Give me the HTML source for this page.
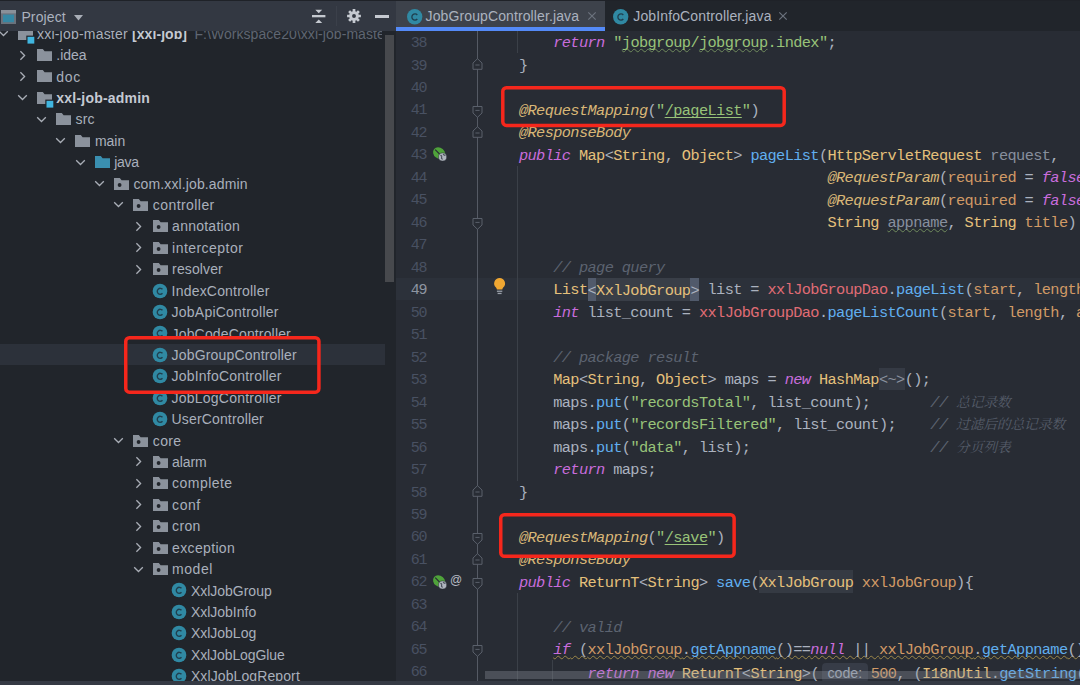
<!DOCTYPE html>
<html lang="en"><head><meta charset="utf-8"><title>IDE</title>
<style>
*{margin:0;padding:0;box-sizing:border-box}
html,body{width:1080px;height:685px;overflow:hidden;background:#282c34}
body{position:relative;font-family:"Liberation Sans","Noto Sans CJK SC",sans-serif;color:#abb2bf}
.abs{position:absolute}
#side{position:absolute;left:0;top:0;width:396.5px;height:685px;background:#21252b;overflow:hidden}
#sidehead{position:absolute;left:0;top:0;width:396.5px;height:30.8px;background:#333842}
#topline{position:absolute;left:0;top:0;width:1080px;height:1.1px;background:#1f2228;z-index:9}
#selrow{position:absolute;left:0;top:343.8px;width:385px;height:21.5px;background:#2c313a}
#sthumb{position:absolute;left:385px;top:34.8px;width:9px;height:247.4px;background:#47494d}
.ic{position:absolute;display:block;overflow:visible}
.tl{position:absolute;height:20px;line-height:20px;font-size:14px;color:#a9b0bc;white-space:pre}
.tl b{font-weight:bold;color:#c5cad3}
.tl .path{color:#5f6672}
#ptitle{position:absolute;left:21.4px;top:7px;height:20px;line-height:20px;font-size:14px;color:#abb2bf}
#editor{position:absolute;left:396.3px;top:0;width:683.7px;height:685px;background:#282c34;overflow:hidden}
#tabbar{position:absolute;left:0;top:0;width:683.7px;height:30.9px;background:#21252b}
#tab1{position:absolute;left:0;top:1px;width:208.4px;height:30px;background:#3d424b}
#tab1u{position:absolute;left:0;top:27.2px;width:208.4px;height:3.7px;background:#548af7}
.tabt{position:absolute;top:6.3px;height:20px;line-height:20px;font-size:14px;color:#abb2bf;white-space:pre}
#curline{position:absolute;left:0;top:278px;width:683.7px;height:22.4px;background:#2c313a}
.ln{position:absolute;left:0;width:29.3px;text-align:right;height:22.5px;line-height:22.5px;font-family:"Liberation Mono",monospace;font-size:15px;letter-spacing:-1.2px;color:#495162;margin-top:2.2px;padding-right:0}
.ln.cur{color:#8e95a1}
.cl{position:absolute;left:87.7px;height:22.5px;line-height:22.5px;font-family:"Liberation Mono","Noto Serif CJK SC",monospace;font-size:15.3px;letter-spacing:-0.61px;color:#abb2bf;white-space:pre;margin-top:1.4px}
.k{color:#c96ddc;font-style:italic}
.s{color:#98c379}
.a{color:#d9b777;font-style:italic}
.c{color:#e5c07b}
.m{color:#61afef}
.f{color:#e06c75}
.p{color:#878f9d}
.o{color:#d19a66}
.n{color:#d19a66}
.cm{color:#5c6370;font-style:italic}
.cj{font-family:"Liberation Mono","Noto Serif CJK SC",serif;font-size:13.8px;line-height:1;letter-spacing:-0.2px;color:#565d6a}
.u{text-decoration:underline wavy #6f8a5c;text-decoration-thickness:0.6px;text-underline-offset:1.2px;text-decoration-skip-ink:none}
.ul{text-decoration:underline;text-underline-offset:2px;text-decoration-thickness:1px;text-decoration-skip-ink:none}
.hl{background:#515a6b;padding:3.97px 0 1.17px}
.hb{background:#353a43;padding:3.97px 0 1.17px}
.fold{background:#353a44;color:#8a919e;padding:3px 0 0.5px}
.wv{text-decoration:underline wavy #9c8748;text-decoration-thickness:0.6px;text-underline-offset:1.2px;text-decoration-skip-ink:none}
.hint{background:#373c47;color:#9da5b4;border-radius:4px;padding:2px 5.5px 2px 5px;margin:0 3px 0 3.5px;font-family:"Liberation Sans",sans-serif;font-size:14.2px;letter-spacing:0}
.redbox{position:absolute;border:3px solid #f5271c;border-radius:6px}
.vline{position:absolute;width:1px;background:#3b4048}
.fline{position:absolute;width:1px;background:#555a64}
#bottom{position:absolute;left:0;top:680.6px;width:1080px;height:5px;background:#353a44;z-index:8}
#hscroll{position:absolute;left:88px;top:670.6px;width:595px;height:8.4px;background:rgba(150,155,165,.32)}
.gat{font-family:"Liberation Sans",sans-serif;font-size:12px;line-height:22px;height:22px;color:#b8bcc4}
#ed{position:absolute;left:0.7px;top:0;width:683px;height:685px}
.hc{background:#393e47;padding:3.97px 0 1.17px}

</style></head>
<body>
<div id="side">
<div id="selrow"></div>
<svg class="ic" style="left:-2.5px;top:28.1px" width="11" height="11" viewBox="0 0 11 11"><path d="M1.2 3.3 L5.5 7.5 L9.8 3.3" fill="none" stroke="#a9aeb7" stroke-width="1.3"/></svg>
<svg class="ic" style="left:17.5px;top:27.6px" width="18" height="16" viewBox="0 0 18 16"><path d="M0 0 H5.8 L7.6 2.2 H15 V12 H0 Z" fill="#8b929c"/><rect x="8.3" y="7.6" width="8.5" height="8.5" fill="#21252b"/><rect x="9.5" y="8.8" width="6.8" height="6.8" fill="#40b6e0"/></svg>
<div class="tl" id="t0" style="left:37.0px;top:23.73px;width:344.5px;overflow:hidden"><span style="letter-spacing:0.207px">xxl-job-master</span><span class="abs" style="left:95px"><b style="letter-spacing:0.072px">[xxl-job]</b></span><span class="abs path" style="left:157.4px"><span style="letter-spacing:0.057px">F:\Workspace20\xxl-job-master</span></span></div>
<svg class="ic" style="left:16.8px;top:49.5px" width="11" height="11" viewBox="0 0 11 11"><path d="M3.4 1.2 L7.6 5.5 L3.4 9.8" fill="none" stroke="#a9aeb7" stroke-width="1.3"/></svg>
<svg class="ic" style="left:36.8px;top:49.0px" width="18" height="16" viewBox="0 0 18 16"><path d="M0 0 H5.8 L7.6 2.2 H15 V12 H0 Z" fill="#8b929c"/></svg>
<div class="tl" id="t1" style="left:56.3px;top:45.15px"><span style="letter-spacing:-0.042px">.idea</span></div>
<svg class="ic" style="left:16.8px;top:70.9px" width="11" height="11" viewBox="0 0 11 11"><path d="M3.4 1.2 L7.6 5.5 L3.4 9.8" fill="none" stroke="#a9aeb7" stroke-width="1.3"/></svg>
<svg class="ic" style="left:36.8px;top:70.4px" width="18" height="16" viewBox="0 0 18 16"><path d="M0 0 H5.8 L7.6 2.2 H15 V12 H0 Z" fill="#8b929c"/></svg>
<div class="tl" id="t2" style="left:56.3px;top:66.56px"><span style="letter-spacing:0.641px">doc</span></div>
<svg class="ic" style="left:16.8px;top:92.3px" width="11" height="11" viewBox="0 0 11 11"><path d="M1.2 3.3 L5.5 7.5 L9.8 3.3" fill="none" stroke="#a9aeb7" stroke-width="1.3"/></svg>
<svg class="ic" style="left:36.8px;top:91.8px" width="18" height="16" viewBox="0 0 18 16"><path d="M0 0 H5.8 L7.6 2.2 H15 V12 H0 Z" fill="#8b929c"/><rect x="8.3" y="7.6" width="8.5" height="8.5" fill="#21252b"/><rect x="9.5" y="8.8" width="6.8" height="6.8" fill="#40b6e0"/></svg>
<div class="tl" id="t3" style="left:56.3px;top:87.98px"><b style="letter-spacing:0.214px">xxl-job-admin</b></div>
<svg class="ic" style="left:36.1px;top:113.7px" width="11" height="11" viewBox="0 0 11 11"><path d="M1.2 3.3 L5.5 7.5 L9.8 3.3" fill="none" stroke="#a9aeb7" stroke-width="1.3"/></svg>
<svg class="ic" style="left:56.1px;top:113.2px" width="18" height="16" viewBox="0 0 18 16"><path d="M0 0 H5.8 L7.6 2.2 H15 V12 H0 Z" fill="#8b929c"/></svg>
<div class="tl" id="t4" style="left:75.6px;top:109.40px"><span style="letter-spacing:0.076px">src</span></div>
<svg class="ic" style="left:55.4px;top:135.2px" width="11" height="11" viewBox="0 0 11 11"><path d="M1.2 3.3 L5.5 7.5 L9.8 3.3" fill="none" stroke="#a9aeb7" stroke-width="1.3"/></svg>
<svg class="ic" style="left:75.4px;top:134.7px" width="18" height="16" viewBox="0 0 18 16"><path d="M0 0 H5.8 L7.6 2.2 H15 V12 H0 Z" fill="#8b929c"/></svg>
<div class="tl" id="t5" style="left:94.9px;top:130.81px"><span style="letter-spacing:0.01px">main</span></div>
<svg class="ic" style="left:74.7px;top:156.6px" width="11" height="11" viewBox="0 0 11 11"><path d="M1.2 3.3 L5.5 7.5 L9.8 3.3" fill="none" stroke="#a9aeb7" stroke-width="1.3"/></svg>
<svg class="ic" style="left:94.7px;top:156.1px" width="18" height="16" viewBox="0 0 18 16"><path d="M0 0 H5.8 L7.6 2.2 H15 V12 H0 Z" fill="#3a8fb0"/></svg>
<div class="tl" id="t6" style="left:114.2px;top:152.23px"><span style="letter-spacing:-0.272px">java</span></div>
<svg class="ic" style="left:94.0px;top:178.0px" width="11" height="11" viewBox="0 0 11 11"><path d="M1.2 3.3 L5.5 7.5 L9.8 3.3" fill="none" stroke="#a9aeb7" stroke-width="1.3"/></svg>
<svg class="ic" style="left:114.0px;top:177.5px" width="18" height="16" viewBox="0 0 18 16"><path d="M0 0 H5.8 L7.6 2.2 H15 V12 H0 Z" fill="#8b929c"/><circle cx="5.6" cy="7" r="1.9" fill="#21252b"/></svg>
<div class="tl" id="t7" style="left:133.5px;top:173.64px"><span style="letter-spacing:0.121px">com.xxl.job.admin</span></div>
<svg class="ic" style="left:113.3px;top:199.4px" width="11" height="11" viewBox="0 0 11 11"><path d="M1.2 3.3 L5.5 7.5 L9.8 3.3" fill="none" stroke="#a9aeb7" stroke-width="1.3"/></svg>
<svg class="ic" style="left:133.3px;top:198.9px" width="18" height="16" viewBox="0 0 18 16"><path d="M0 0 H5.8 L7.6 2.2 H15 V12 H0 Z" fill="#8b929c"/><circle cx="5.6" cy="7" r="1.9" fill="#21252b"/></svg>
<div class="tl" id="t8" style="left:152.8px;top:195.06px"><span style="letter-spacing:0.431px">controller</span></div>
<svg class="ic" style="left:132.6px;top:220.8px" width="11" height="11" viewBox="0 0 11 11"><path d="M3.4 1.2 L7.6 5.5 L3.4 9.8" fill="none" stroke="#a9aeb7" stroke-width="1.3"/></svg>
<svg class="ic" style="left:152.6px;top:220.3px" width="18" height="16" viewBox="0 0 18 16"><path d="M0 0 H5.8 L7.6 2.2 H15 V12 H0 Z" fill="#8b929c"/><circle cx="5.6" cy="7" r="1.9" fill="#21252b"/></svg>
<div class="tl" id="t9" style="left:172.1px;top:216.47px"><span style="letter-spacing:0.249px">annotation</span></div>
<svg class="ic" style="left:132.6px;top:242.2px" width="11" height="11" viewBox="0 0 11 11"><path d="M3.4 1.2 L7.6 5.5 L3.4 9.8" fill="none" stroke="#a9aeb7" stroke-width="1.3"/></svg>
<svg class="ic" style="left:152.6px;top:241.7px" width="18" height="16" viewBox="0 0 18 16"><path d="M0 0 H5.8 L7.6 2.2 H15 V12 H0 Z" fill="#8b929c"/><circle cx="5.6" cy="7" r="1.9" fill="#21252b"/></svg>
<div class="tl" id="t10" style="left:172.1px;top:237.88px"><span style="letter-spacing:0.459px">interceptor</span></div>
<svg class="ic" style="left:132.6px;top:263.6px" width="11" height="11" viewBox="0 0 11 11"><path d="M3.4 1.2 L7.6 5.5 L3.4 9.8" fill="none" stroke="#a9aeb7" stroke-width="1.3"/></svg>
<svg class="ic" style="left:152.6px;top:263.1px" width="18" height="16" viewBox="0 0 18 16"><path d="M0 0 H5.8 L7.6 2.2 H15 V12 H0 Z" fill="#8b929c"/><circle cx="5.6" cy="7" r="1.9" fill="#21252b"/></svg>
<div class="tl" id="t11" style="left:172.1px;top:259.30px"><span style="letter-spacing:0.125px">resolver</span></div>
<svg class="ic" style="left:152.1px;top:282.6px" width="16" height="16" viewBox="0 0 16 16"><circle cx="8" cy="8" r="7.35" fill="#3089a3"/><path d="M10.5 6.3 A3 3 0 1 0 10.5 10.3" fill="none" stroke="#1f3f4e" stroke-width="1.35"/></svg>
<div class="tl" id="t12" style="left:171.6px;top:280.71px"><span style="letter-spacing:0.198px">IndexController</span></div>
<svg class="ic" style="left:152.1px;top:304.0px" width="16" height="16" viewBox="0 0 16 16"><circle cx="8" cy="8" r="7.35" fill="#3089a3"/><path d="M10.5 6.3 A3 3 0 1 0 10.5 10.3" fill="none" stroke="#1f3f4e" stroke-width="1.35"/></svg>
<div class="tl" id="t13" style="left:171.6px;top:302.13px"><span style="letter-spacing:0.225px">JobApiController</span></div>
<svg class="ic" style="left:152.1px;top:325.4px" width="16" height="16" viewBox="0 0 16 16"><circle cx="8" cy="8" r="7.35" fill="#3089a3"/><path d="M10.5 6.3 A3 3 0 1 0 10.5 10.3" fill="none" stroke="#1f3f4e" stroke-width="1.35"/></svg>
<div class="tl" id="t14" style="left:171.6px;top:323.54px"><span style="letter-spacing:0.151px">JobCodeController</span></div>
<svg class="ic" style="left:152.1px;top:389.6px" width="16" height="16" viewBox="0 0 16 16"><circle cx="8" cy="8" r="7.35" fill="#3089a3"/><path d="M10.5 6.3 A3 3 0 1 0 10.5 10.3" fill="none" stroke="#1f3f4e" stroke-width="1.35"/></svg>
<div class="tl" id="t17" style="left:171.6px;top:387.79px"><span style="letter-spacing:0.217px">JobLogController</span></div>
<svg class="ic" style="left:152.1px;top:411.1px" width="16" height="16" viewBox="0 0 16 16"><circle cx="8" cy="8" r="7.35" fill="#3089a3"/><path d="M10.5 6.3 A3 3 0 1 0 10.5 10.3" fill="none" stroke="#1f3f4e" stroke-width="1.35"/></svg>
<div class="tl" id="t18" style="left:171.6px;top:409.20px"><span style="letter-spacing:0.146px">UserController</span></div>
<svg class="ic" style="left:113.3px;top:435.0px" width="11" height="11" viewBox="0 0 11 11"><path d="M1.2 3.3 L5.5 7.5 L9.8 3.3" fill="none" stroke="#a9aeb7" stroke-width="1.3"/></svg>
<svg class="ic" style="left:133.3px;top:434.5px" width="18" height="16" viewBox="0 0 18 16"><path d="M0 0 H5.8 L7.6 2.2 H15 V12 H0 Z" fill="#8b929c"/><circle cx="5.6" cy="7" r="1.9" fill="#21252b"/></svg>
<div class="tl" id="t19" style="left:152.8px;top:430.62px"><span style="letter-spacing:0.341px">core</span></div>
<svg class="ic" style="left:132.6px;top:456.4px" width="11" height="11" viewBox="0 0 11 11"><path d="M3.4 1.2 L7.6 5.5 L3.4 9.8" fill="none" stroke="#a9aeb7" stroke-width="1.3"/></svg>
<svg class="ic" style="left:152.6px;top:455.9px" width="18" height="16" viewBox="0 0 18 16"><path d="M0 0 H5.8 L7.6 2.2 H15 V12 H0 Z" fill="#8b929c"/><circle cx="5.6" cy="7" r="1.9" fill="#21252b"/></svg>
<div class="tl" id="t20" style="left:172.1px;top:452.03px"><span style="letter-spacing:-0.103px">alarm</span></div>
<svg class="ic" style="left:132.6px;top:477.8px" width="11" height="11" viewBox="0 0 11 11"><path d="M3.4 1.2 L7.6 5.5 L3.4 9.8" fill="none" stroke="#a9aeb7" stroke-width="1.3"/></svg>
<svg class="ic" style="left:152.6px;top:477.3px" width="18" height="16" viewBox="0 0 18 16"><path d="M0 0 H5.8 L7.6 2.2 H15 V12 H0 Z" fill="#8b929c"/><circle cx="5.6" cy="7" r="1.9" fill="#21252b"/></svg>
<div class="tl" id="t21" style="left:172.1px;top:473.45px"><span style="letter-spacing:0.461px">complete</span></div>
<svg class="ic" style="left:132.6px;top:499.2px" width="11" height="11" viewBox="0 0 11 11"><path d="M3.4 1.2 L7.6 5.5 L3.4 9.8" fill="none" stroke="#a9aeb7" stroke-width="1.3"/></svg>
<svg class="ic" style="left:152.6px;top:498.7px" width="18" height="16" viewBox="0 0 18 16"><path d="M0 0 H5.8 L7.6 2.2 H15 V12 H0 Z" fill="#8b929c"/><circle cx="5.6" cy="7" r="1.9" fill="#21252b"/></svg>
<div class="tl" id="t22" style="left:172.1px;top:494.86px"><span style="letter-spacing:0.533px">conf</span></div>
<svg class="ic" style="left:132.6px;top:520.6px" width="11" height="11" viewBox="0 0 11 11"><path d="M3.4 1.2 L7.6 5.5 L3.4 9.8" fill="none" stroke="#a9aeb7" stroke-width="1.3"/></svg>
<svg class="ic" style="left:152.6px;top:520.1px" width="18" height="16" viewBox="0 0 18 16"><path d="M0 0 H5.8 L7.6 2.2 H15 V12 H0 Z" fill="#8b929c"/><circle cx="5.6" cy="7" r="1.9" fill="#21252b"/></svg>
<div class="tl" id="t23" style="left:172.1px;top:516.28px"><span style="letter-spacing:0.341px">cron</span></div>
<svg class="ic" style="left:132.6px;top:542.0px" width="11" height="11" viewBox="0 0 11 11"><path d="M3.4 1.2 L7.6 5.5 L3.4 9.8" fill="none" stroke="#a9aeb7" stroke-width="1.3"/></svg>
<svg class="ic" style="left:152.6px;top:541.5px" width="18" height="16" viewBox="0 0 18 16"><path d="M0 0 H5.8 L7.6 2.2 H15 V12 H0 Z" fill="#8b929c"/><circle cx="5.6" cy="7" r="1.9" fill="#21252b"/></svg>
<div class="tl" id="t24" style="left:172.1px;top:537.70px"><span style="letter-spacing:0.34px">exception</span></div>
<svg class="ic" style="left:132.6px;top:563.5px" width="11" height="11" viewBox="0 0 11 11"><path d="M1.2 3.3 L5.5 7.5 L9.8 3.3" fill="none" stroke="#a9aeb7" stroke-width="1.3"/></svg>
<svg class="ic" style="left:152.6px;top:563.0px" width="18" height="16" viewBox="0 0 18 16"><path d="M0 0 H5.8 L7.6 2.2 H15 V12 H0 Z" fill="#8b929c"/><circle cx="5.6" cy="7" r="1.9" fill="#21252b"/></svg>
<div class="tl" id="t25" style="left:172.1px;top:559.11px"><span style="letter-spacing:0.532px">model</span></div>
<svg class="ic" style="left:171.4px;top:582.4px" width="16" height="16" viewBox="0 0 16 16"><circle cx="8" cy="8" r="7.35" fill="#3089a3"/><path d="M10.5 6.3 A3 3 0 1 0 10.5 10.3" fill="none" stroke="#1f3f4e" stroke-width="1.35"/></svg>
<div class="tl" id="t26" style="left:190.9px;top:580.52px"><span style="letter-spacing:-0.012px">XxlJobGroup</span></div>
<svg class="ic" style="left:171.4px;top:603.8px" width="16" height="16" viewBox="0 0 16 16"><circle cx="8" cy="8" r="7.35" fill="#3089a3"/><path d="M10.5 6.3 A3 3 0 1 0 10.5 10.3" fill="none" stroke="#1f3f4e" stroke-width="1.35"/></svg>
<div class="tl" id="t27" style="left:190.9px;top:601.94px"><span style="letter-spacing:-0.008px">XxlJobInfo</span></div>
<svg class="ic" style="left:171.4px;top:625.2px" width="16" height="16" viewBox="0 0 16 16"><circle cx="8" cy="8" r="7.35" fill="#3089a3"/><path d="M10.5 6.3 A3 3 0 1 0 10.5 10.3" fill="none" stroke="#1f3f4e" stroke-width="1.35"/></svg>
<div class="tl" id="t28" style="left:190.9px;top:623.36px"><span style="letter-spacing:-0.01px">XxlJobLog</span></div>
<svg class="ic" style="left:171.4px;top:646.6px" width="16" height="16" viewBox="0 0 16 16"><circle cx="8" cy="8" r="7.35" fill="#3089a3"/><path d="M10.5 6.3 A3 3 0 1 0 10.5 10.3" fill="none" stroke="#1f3f4e" stroke-width="1.35"/></svg>
<div class="tl" id="t29" style="left:190.9px;top:644.77px"><span style="letter-spacing:-0.089px">XxlJobLogGlue</span></div>
<svg class="ic" style="left:171.4px;top:668.0px" width="16" height="16" viewBox="0 0 16 16"><circle cx="8" cy="8" r="7.35" fill="#3089a3"/><path d="M10.5 6.3 A3 3 0 1 0 10.5 10.3" fill="none" stroke="#1f3f4e" stroke-width="1.35"/></svg>
<div class="tl" id="t30" style="left:190.9px;top:666.18px"><span style="letter-spacing:0.106px">XxlJobLogReport</span></div>
<svg class="ic" style="left:124.3px;top:336.3px" width="196.7" height="57.9" viewBox="0 0 196.7 57.9"><rect x="1.75" y="1.75" width="193.20" height="54.40" rx="3.6" fill="#21252b" stroke="#f5271c" stroke-width="3.5"/></svg>
<div class="abs" style="left:127.8px;top:343.8px;width:189.6px;height:21.5px;background:#2c313a"></div>
<svg class="ic" style="left:152.1px;top:346.8px" width="16" height="16" viewBox="0 0 16 16"><circle cx="8" cy="8" r="7.35" fill="#3089a3"/><path d="M10.5 6.3 A3 3 0 1 0 10.5 10.3" fill="none" stroke="#1f3f4e" stroke-width="1.35"/></svg>
<div class="tl" id="t15" style="left:171.6px;top:344.96px"><span style="letter-spacing:0.174px">JobGroupController</span></div>
<svg class="ic" style="left:152.1px;top:368.2px" width="16" height="16" viewBox="0 0 16 16"><circle cx="8" cy="8" r="7.35" fill="#3089a3"/><path d="M10.5 6.3 A3 3 0 1 0 10.5 10.3" fill="none" stroke="#1f3f4e" stroke-width="1.35"/></svg>
<div class="tl" id="t16" style="left:171.6px;top:366.37px"><span style="letter-spacing:0.204px">JobInfoController</span></div>
<div id="sthumb"></div>
<div id="sidehead">
<svg class="ic" style="left:1px;top:9.7px" width="15" height="14" viewBox="0 0 15 14"><rect x="0" y="0" width="15" height="14" fill="#6b727c"/><rect x="0" y="0" width="15" height="3.4" fill="#8a9099"/><rect x="2" y="4.6" width="11" height="7.6" fill="#3688a5"/></svg>
<div id="ptitle"><span style="letter-spacing:0.132px">Project</span></div>
<svg class="ic" style="left:73.7px;top:14.7px" width="9" height="6" viewBox="0 0 9 6"><path d="M0 0 H9 L4.5 5.4 Z" fill="#a9aeb7"/></svg>
<svg class="ic" style="left:311px;top:9px" width="16" height="15" viewBox="0 0 16 15"><rect x="1" y="6" width="13.4" height="2.3" fill="#c5c9d0"/><path d="M4.3 0.8 H11.2 L7.75 4.2 Z M4.3 14.1 H11.2 L7.75 10.5 Z" fill="#c5c9d0"/></svg>
<div class="abs" style="left:336px;top:6px;width:1px;height:20px;background:#3b404a"></div>
<svg class="ic" style="left:346.7px;top:9.2px" width="14" height="14" viewBox="0 0 14 14"><circle cx="7" cy="7" r="3.4" fill="none" stroke="#c5c9d0" stroke-width="2.9"/><g stroke="#c5c9d0" stroke-width="2.7"><path d="M7 0.1 V3 M7 11 V13.9 M0.1 7 H3 M11 7 H13.9 M2.1 2.1 L4.2 4.2 M9.8 9.8 L11.9 11.9 M2.1 11.9 L4.2 9.8 M9.8 4.2 L11.9 2.1"/></g></svg>
<div class="abs" style="left:375.3px;top:15.2px;width:13.4px;height:2.4px;background:#c5c9d0"></div>
</div>
</div>
<div id="editor">
<div id="curline"></div>
<div id="ed">
<div class="vline" style="left:120.5px;top:30.5px;height:22.5px"></div>
<div class="vline" style="left:120.5px;top:166px;height:314.5px"></div>
<div class="vline" style="left:120.5px;top:592.7px;height:92px"></div>
<div class="vline" style="left:155px;top:660.2px;height:24px"></div>
<div class="fline" style="left:80px;top:30.5px;height:655px"></div>
<svg class="ic" style="left:75.2px;top:58.18px" width="11" height="12" viewBox="0 0 11 12"><path d="M1 11.3 V5 L5.5 0.7 L10 5 V11.3 Z" fill="#282c34" stroke="#5a606b" stroke-width="1"/><path d="M3.4 7 H7.6" stroke="#5a606b" stroke-width="1"/></svg>
<svg class="ic" style="left:75.2px;top:105.62px" width="11" height="12" viewBox="0 0 11 12"><path d="M1 0.5 H10 V7 L5.5 11.3 L1 7 Z" fill="#282c34" stroke="#5a606b" stroke-width="1"/><path d="M3.4 4.4 H7.6" stroke="#5a606b" stroke-width="1"/></svg>
<svg class="ic" style="left:75.2px;top:125.60px" width="11" height="12" viewBox="0 0 11 12"><path d="M1 11.3 V5 L5.5 0.7 L10 5 V11.3 Z" fill="#282c34" stroke="#5a606b" stroke-width="1"/><path d="M3.4 7 H7.6" stroke="#5a606b" stroke-width="1"/></svg>
<svg class="ic" style="left:75.2px;top:218.00px" width="11" height="12" viewBox="0 0 11 12"><path d="M1 0.5 H10 V7 L5.5 11.3 L1 7 Z" fill="#282c34" stroke="#5a606b" stroke-width="1"/><path d="M3.4 4.4 H7.6" stroke="#5a606b" stroke-width="1"/></svg>
<svg class="ic" style="left:75.2px;top:485.20px" width="11" height="12" viewBox="0 0 11 12"><path d="M1 11.3 V5 L5.5 0.7 L10 5 V11.3 Z" fill="#282c34" stroke="#5a606b" stroke-width="1"/><path d="M3.4 7 H7.6" stroke="#5a606b" stroke-width="1"/></svg>
<svg class="ic" style="left:75.2px;top:532.65px" width="11" height="12" viewBox="0 0 11 12"><path d="M1 0.5 H10 V7 L5.5 11.3 L1 7 Z" fill="#282c34" stroke="#5a606b" stroke-width="1"/><path d="M3.4 4.4 H7.6" stroke="#5a606b" stroke-width="1"/></svg>
<svg class="ic" style="left:75.2px;top:552.63px" width="11" height="12" viewBox="0 0 11 12"><path d="M1 11.3 V5 L5.5 0.7 L10 5 V11.3 Z" fill="#282c34" stroke="#5a606b" stroke-width="1"/><path d="M3.4 7 H7.6" stroke="#5a606b" stroke-width="1"/></svg>
<svg class="ic" style="left:75.2px;top:577.60px" width="11" height="12" viewBox="0 0 11 12"><path d="M1 0.5 H10 V7 L5.5 11.3 L1 7 Z" fill="#282c34" stroke="#5a606b" stroke-width="1"/><path d="M3.4 4.4 H7.6" stroke="#5a606b" stroke-width="1"/></svg>
<svg class="ic" style="left:75.2px;top:645.03px" width="11" height="12" viewBox="0 0 11 12"><path d="M1 0.5 H10 V7 L5.5 11.3 L1 7 Z" fill="#282c34" stroke="#5a606b" stroke-width="1"/><path d="M3.4 4.4 H7.6" stroke="#5a606b" stroke-width="1"/></svg>
<svg class="ic" style="left:35px;top:146.47px" width="16" height="16" viewBox="0 0 16 16"><ellipse cx="7.2" cy="7.2" rx="6.6" ry="5.4" transform="rotate(40 7.2 7.2)" fill="#4fa33a"/><path d="M3.2 3.6 L8 8.5" stroke="#282c34" stroke-width="1.1"/><circle cx="10.6" cy="11" r="4.1" fill="#aeb4bd" stroke="#282c34" stroke-width="0.5"/><path d="M8.4 9.3 Q10 9.6 9.6 11 Q9 12.6 10.6 13.4 M11.2 8 Q12 9.6 13.4 9.4" fill="none" stroke="#4a505b" stroke-width="1.2"/></svg>
<svg class="ic" style="left:35px;top:573.50px" width="16" height="16" viewBox="0 0 16 16"><ellipse cx="7.2" cy="7.2" rx="6.6" ry="5.4" transform="rotate(40 7.2 7.2)" fill="#4fa33a"/><path d="M3.2 3.6 L8 8.5" stroke="#282c34" stroke-width="1.1"/><circle cx="10.6" cy="11" r="4.1" fill="#aeb4bd" stroke="#282c34" stroke-width="0.5"/><path d="M8.4 9.3 Q10 9.6 9.6 11 Q9 12.6 10.6 13.4 M11.2 8 Q12 9.6 13.4 9.4" fill="none" stroke="#4a505b" stroke-width="1.2"/></svg>
<div class="abs gat" style="left:53px;top:568.90px">@</div>
<svg class="ic" style="left:96.6px;top:278.13px" width="12" height="17" viewBox="0 0 12 17"><path d="M5.6 0 A5.5 5.5 0 0 1 9.2 9.6 Q8.4 10.6 8.3 11.6 H2.9 Q2.8 10.6 2 9.6 A5.5 5.5 0 0 1 5.6 0 Z" fill="#f0a732"/><rect x="2.9" y="12.6" width="5.4" height="1.3" fill="#9aa0aa"/><rect x="3.6" y="14.8" width="4" height="1.3" fill="#9aa0aa"/></svg>
<div class="ln" style="top:30.86px">38</div>
<div class="cl" style="top:30.86px">        <span class="k">return</span> <span class="s">"</span><span class="s u">jobgroup</span><span class="s">/</span><span class="s u">jobgroup</span><span class="s">.index"</span>;</div>
<div class="ln" style="top:53.34px">39</div>
<div class="cl" style="top:53.34px">    }</div>
<div class="ln" style="top:75.81px">40</div>
<div class="ln" style="top:98.29px">41</div>
<div class="cl" style="top:98.29px">    <span class="a">@RequestMapping</span>(<span class="s">"</span><span class="s ul">/pageList</span><span class="s">"</span>)</div>
<div class="ln" style="top:120.76px">42</div>
<div class="cl" style="top:120.76px">    <span class="a">@ResponseBody</span></div>
<div class="ln" style="top:143.24px">43</div>
<div class="cl" style="top:143.24px">    <span class="k">public</span> <span class="c">Map</span>&lt;<span class="c">String</span>, <span class="c">Object</span>&gt; <span class="m">pageList</span>(<span class="c">HttpServletRequest</span> <span class="p">request</span>,</div>
<div class="ln" style="top:165.71px">44</div>
<div class="cl" style="top:165.71px">                                        <span class="a">@RequestParam</span>(<span class="o">required</span> = <span class="k">false</span>, <span class="o">defaultValue</span> = <span class="s">"0"</span>)</div>
<div class="ln" style="top:188.19px">45</div>
<div class="cl" style="top:188.19px">                                        <span class="a">@RequestParam</span>(<span class="o">required</span> = <span class="k">false</span>, <span class="o">defaultValue</span> = <span class="s">"10"</span>)</div>
<div class="ln" style="top:210.66px">46</div>
<div class="cl" style="top:210.66px">                                        <span class="c">String</span> <span class="p u">appname</span>, <span class="c">String</span> <span class="o">title</span>) {</div>
<div class="ln" style="top:233.14px">47</div>
<div class="ln" style="top:255.61px">48</div>
<div class="cl" style="top:255.61px">        <span class="cm">// page query</span></div>
<div class="ln cur" style="top:278.09px">49</div>
<div class="cl" style="top:278.09px">        <span class="c">List</span><span class="hl">&lt;</span><span class="c hc">XxlJobGroup</span><span class="hl">&gt;</span> list = <span class="f">xxlJobGroupDao</span>.<span class="m">pageList</span>(<span class="o">start</span>, <span class="o">length</span>, <span class="o">appname</span>, <span class="o">title</span>);</div>
<div class="ln" style="top:300.56px">50</div>
<div class="cl" style="top:300.56px">        <span class="k">int</span> list_count = <span class="f">xxlJobGroupDao</span>.<span class="m">pageListCount</span>(<span class="o">start</span>, <span class="o">length</span>, <span class="o">appname</span>, <span class="o">title</span>);</div>
<div class="ln" style="top:323.04px">51</div>
<div class="ln" style="top:345.51px">52</div>
<div class="cl" style="top:345.51px">        <span class="cm">// package result</span></div>
<div class="ln" style="top:367.99px">53</div>
<div class="cl" style="top:367.99px">        <span class="c">Map</span>&lt;<span class="c">String</span>, <span class="c">Object</span>&gt; maps = <span class="k">new</span> <span class="c">HashMap</span><span class="fold">&lt;~&gt;</span>();</div>
<div class="ln" style="top:390.46px">54</div>
<div class="cl" style="top:390.46px">        maps.<span class="m">put</span>(<span class="s">"recordsTotal"</span>, list_count);       <span class="cm">// </span><span class="cm cj">总记录数</span></div>
<div class="ln" style="top:412.94px">55</div>
<div class="cl" style="top:412.94px">        maps.<span class="m">put</span>(<span class="s">"recordsFiltered"</span>, list_count);    <span class="cm">// </span><span class="cm cj">过滤后的总记录数</span></div>
<div class="ln" style="top:435.41px">56</div>
<div class="cl" style="top:435.41px">        maps.<span class="m">put</span>(<span class="s">"data"</span>, list);                     <span class="cm">// </span><span class="cm cj">分页列表</span></div>
<div class="ln" style="top:457.89px">57</div>
<div class="cl" style="top:457.89px">        <span class="k">return</span> maps;</div>
<div class="ln" style="top:480.36px">58</div>
<div class="cl" style="top:480.36px">    }</div>
<div class="ln" style="top:502.84px">59</div>
<div class="ln" style="top:525.31px">60</div>
<div class="cl" style="top:525.31px;z-index:3">    <span class="a">@RequestMapping</span>(<span class="s">"</span><span class="s ul">/save</span><span class="s">"</span>)</div>
<div class="ln" style="top:547.79px">61</div>
<div class="cl" style="top:547.79px">    <span class="a">@ResponseBody</span></div>
<div class="ln" style="top:570.26px">62</div>
<div class="cl" style="top:570.26px">    <span class="k">public</span> <span class="c">ReturnT</span>&lt;<span class="c">String</span>&gt; <span class="m">save</span>(<span class="c hb">XxlJobGroup</span> <span class="o">xxlJobGroup</span>){</div>
<div class="ln" style="top:592.74px">63</div>
<div class="ln" style="top:615.21px">64</div>
<div class="cl" style="top:615.21px">        <span class="cm">// valid</span></div>
<div class="ln" style="top:637.69px">65</div>
<div class="cl" style="top:637.69px">        <span class="wv"><span class="k">if</span> (<span class="o">xxlJobGroup</span>.<span class="m">getAppname</span>()==<span class="k">null</span> || <span class="o">xxlJobGroup</span>.<span class="m">getAppname</span>().<span class="m">trim</span>().<span class="m">length</span>()==0) {</span></div>
<div class="ln" style="top:660.16px">66</div>
<div class="cl" style="top:660.16px">            <span class="k">return</span> <span class="k">new</span> <span class="c">ReturnT</span>&lt;<span class="c">String</span>&gt;(<span class="hint">code:</span><span class="n">500</span>, (<span class="c">I18nUtil</span>.<span class="m">getString</span>(<span class="s">"system_please_input"</span>)</div>
<div id="hscroll"></div>
<svg class="ic" style="left:103.6px;top:85.9px" width="285.0" height="41.2" viewBox="0 0 285.0 41.2"><rect x="1.75" y="1.75" width="281.50" height="37.70" rx="3.6" fill="none" stroke="#f5271c" stroke-width="3.5"/></svg>
<svg class="ic" style="left:102.1px;top:513.2px;z-index:2" width="236.9" height="45.1" viewBox="0 0 236.9 45.1"><rect x="1.75" y="1.75" width="233.40" height="41.60" rx="3.6" fill="#282c34" stroke="#f5271c" stroke-width="3.5"/></svg>
</div>
<div id="tabbar">
<div id="tab1"></div><div id="tab1u"></div>
<div class="abs" style="left:0.7px;top:0;width:683px;height:31px">
<svg class="ic" style="left:9.6px;top:9.3px" width="15.4" height="15.4" viewBox="0 0 16 16"><circle cx="8" cy="8" r="8" fill="#3089a3"/><path d="M10.7 6.2 A3.2 3.2 0 1 0 10.7 10.4" fill="none" stroke="#1f3f4e" stroke-width="1.4"/></svg>
<div class="tabt" id="tt1" style="left:28.6px"><span style="letter-spacing:0.109px">JobGroupController.java</span></div>
<svg class="ic" style="left:191px;top:12.3px" width="8" height="8" viewBox="0 0 8 8"><path d="M0.3 0.3 L7.7 7.7 M7.7 0.3 L0.3 7.7" stroke="#6b727d" stroke-width="1.2"/></svg>
<svg class="ic" style="left:216.3px;top:9.3px" width="15.4" height="15.4" viewBox="0 0 16 16"><circle cx="8" cy="8" r="8" fill="#3089a3"/><path d="M10.7 6.2 A3.2 3.2 0 1 0 10.7 10.4" fill="none" stroke="#1f3f4e" stroke-width="1.4"/></svg>
<div class="tabt" id="tt2" style="left:236.3px"><span style="letter-spacing:0.131px">JobInfoController.java</span></div>
<svg class="ic" style="left:382px;top:12.3px" width="8" height="8" viewBox="0 0 8 8"><path d="M0.3 0.3 L7.7 7.7 M7.7 0.3 L0.3 7.7" stroke="#6b727d" stroke-width="1.2"/></svg>
</div>
</div>
</div>
<div id="topline"></div>
<div id="bottom"></div>

</body></html>
